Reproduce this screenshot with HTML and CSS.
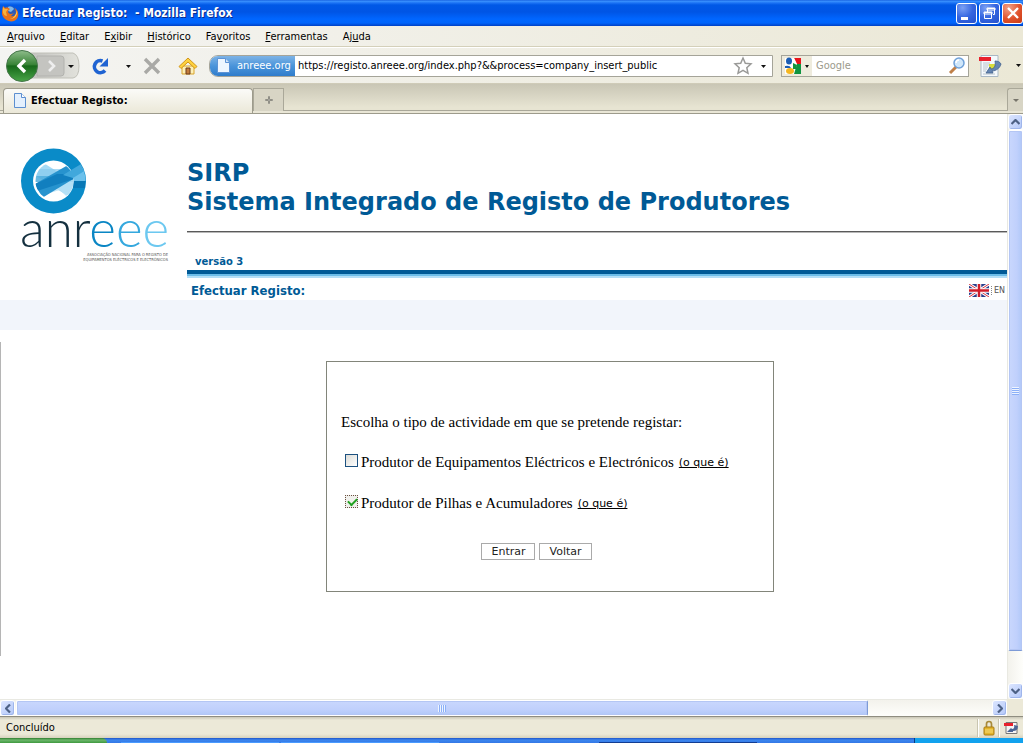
FILE: index.html
```html
<!DOCTYPE html>
<html lang="pt">
<head>
<meta charset="utf-8">
<title>Efectuar Registo: - Mozilla Firefox</title>
<link rel="stylesheet" href="styles.css">
</head>
<body>
<header class="titlebar">
  <svg class="fox" width="18" height="18" viewBox="0 0 18 18">
    <circle cx="9" cy="9" r="7" fill="#2c5cb8"/><path d="M7 3c3-1 5 0 6 2l-3 3-3-1z" fill="#7db8ee"/>
    <path d="M2 2l2 2c2-1 4 0 5 1L7 7c0 3 3 4 6 2l-3 3c3 1 5-1 5-4l-1-4c5 4 4 11-1 13S0 14 1 8z" fill="#e8721c"/>
    <path d="M2 3l2 2 3 0-2 3 1 4c-3 0-5-3-4-9z" fill="#f9b13c"/><path d="M16 6c1 5-2 9-7 9 4-1 6-4 7-9z" fill="#fbd25a"/>
  </svg>
  <span class="title">Efectuar Registo: &nbsp;- Mozilla Firefox</span>
  <div class="winbtns">
    <button class="winbtn" aria-label="Minimizar"><svg width="19" height="19"><path d="M4 13h7v3H4z" fill="#fff"/></svg></button>
    <button class="winbtn" aria-label="Restaurar"><svg width="19" height="19"><path d="M7.500 8V4.500h7v6H13M7 4h8v2H7z M4.500 8.500h7v6h-7z M4 8h8v2H4z" fill="none" stroke="#fff"/></svg></button>
    <button class="winbtn close" aria-label="Fechar"><svg width="19" height="19"><path d="M5 4l10 10M15 4L5 14" stroke="#fff" stroke-width="2.300"/></svg></button>
  </div>
</header>
<nav class="menubar">
  <button><u>A</u>rquivo</button><button><u>E</u>ditar</button><button>E<u>x</u>ibir</button><button><u>H</u>istórico</button><button>Fa<u>v</u>oritos</button><button><u>F</u>erramentas</button><button>Aj<u>u</u>da</button>
</nav>
<div class="toolbar">
  <button class="backfwd" aria-label="Voltar e avançar">
    <svg width="78" height="34" viewBox="0 0 78 34">
      <defs>
        <linearGradient id="gb" x2="0" y2="1"><stop offset="0" stop-color="#8fbd8b"/><stop offset=".45" stop-color="#3a8438"/><stop offset=".5" stop-color="#17691a"/><stop offset="1" stop-color="#49a548"/></linearGradient>
        <linearGradient id="gg" x2="1" y2="0"><stop offset="0" stop-color="#b9b9b5"/><stop offset=".5" stop-color="#cdcdc9"/><stop offset="1" stop-color="#e2e2dc"/></linearGradient>
      </defs>
      <path d="M12 4h58q6 2 6 13t-6 12H12z" fill="url(#gg)" stroke="#c0c0b8"/>
      <path d="M34 7h24q3 0 3 3v14q0 3-3 3H34z" fill="#c4c4c0" stroke="#b2b2ae"/>
      <circle cx="19" cy="17" r="15.500" fill="url(#gb)" stroke="#46764a"/>
      <path d="M22 11l-6 6 6 6" fill="none" stroke="#fff" stroke-width="3.400"/>
      <path d="M46 12l5 5-5 5" fill="none" stroke="#eee" stroke-width="2.600"/>
      <path d="M65 16h6l-3 3z" fill="#111"/>
    </svg>
  </button>
  <button class="ico" aria-label="Recarregar">
    <svg width="44" height="24" viewBox="0 0 44 24"><path d="M12.500 7A6 6 0 1 0 15 16.500" fill="none" stroke="#1f63d2" stroke-width="3.600"/><path d="M18 4v8.500H9.500z" fill="#1f63d2"/><path d="M36 11h5l-2.500 3z" fill="#111"/></svg>
  </button>
  <button class="ico stop" aria-label="Parar"><svg width="20" height="20"><path d="M3 3l14 14M17 3L3 17" stroke="#a9a9a6" stroke-width="3.400"/></svg></button>
  <button class="ico" aria-label="Início"><svg width="20" height="20"><path d="M4 10h12v8H4z" fill="#fdf0b8" stroke="#d9a52c"/><path d="M10 2L1 10.500l2 2 7-6.500 7 6.500 2-2z" fill="#ffd23f" stroke="#d0951b"/><path d="M8 12h4v6H8z" fill="#c27c3c" stroke="#6d3a1a"/></svg></button>
  <div class="urlbox">
    <span class="identity">
      <svg width="16" height="17"><path d="M1.500 1.500h8l4 4v10h-12z" fill="#eef6ff" stroke="#5c93d6"/><path d="M9.500 1.500v4h4" fill="#cfe2f8" stroke="#5c93d6"/></svg>
      anreee.org</span>
    <input class="url" type="text" aria-label="Endereço" value="https://registo.anreee.org/index.php?&amp;&amp;process=company_insert_public">
    <svg width="39" height="20"><path d="M10 2l2.300 5.200 5.700.6-4.200 3.900 1.200 5.600-5-2.900-5 2.900 1.200-5.600L2 7.800l5.700-.6z" fill="#fff" stroke="#9a9a98" stroke-width="1.500"/><path d="M28 9h5l-2.500 3z" fill="#111"/></svg>
  </div>
  <div class="searchbox">
    <button class="engine" aria-label="Motor de busca"><svg width="27" height="18"><path d="M10 1h7v7h-4z" fill="#e8131b"/><path d="M9 7h8v10H9z" fill="#109440"/><path d="M1 1h9l3 6-3 10H1z" fill="#fff"/><ellipse cx="5" cy="4" rx="3" ry="3.500" fill="#1c5db4"/><path d="M1 9q5-1 6 2H1z" fill="#1c5db4"/><ellipse cx="6" cy="14" rx="4" ry="3" fill="#f5b620"/><path d="M9 6l4 2-1 4-3 0z" fill="#109440"/><path d="M21 8h4l-2 3z" fill="#111"/></svg></button>
    <input class="search" type="text" aria-label="Pesquisar" placeholder="Google">
    <svg width="20" height="20"><path d="M3 17l6-6" stroke="#bf7f48" stroke-width="3"/><circle cx="12" cy="7" r="5" fill="#cfe6fa" stroke="#6fa0d8" stroke-width="1.500"/><path d="M9 7q0-3 3-3" stroke="#fff" stroke-width="1.500" fill="none"/></svg>
  </div>
  <button class="ico pdf" aria-label="Converter"><svg width="24" height="24"><path d="M3 1.500h17v21H3z" fill="#f5f9fc" stroke="#a9b8c4"/><path d="M5 9h7M5 11h7M5 13h5M5 15h4M5 17h3M5 20h12" stroke="#b9c4cd"/><path d="M1 3h12v4H1z" fill="#e8202c"/><path d="M11 10h6v5h-6z" fill="#d8dc3c"/><path d="M17 7c3 0 5 1 6 3-1 4-5 7-9 7l1 2H8l4-6 1 2c3 0 5-3 4-8z" fill="#6585b2" stroke="#3f5f8c" stroke-width=".8"/></svg></button>
  <svg class="over" width="7" height="6"><path d="M1 1h5L3.500 4z" fill="#111"/></svg>
</div>
<div class="tabs">
  <button class="tab"><svg width="16" height="17"><path d="M2.500 1.500h7l4 4v10h-11z" fill="#e4f0fd" stroke="#5c8fd0"/><path d="M9.500 1.500v4h4" fill="#fff" stroke="#5c8fd0"/></svg>Efectuar Registo:</button>
  <button class="newtab" aria-label="Nova aba"><svg width="10" height="10"><path d="M4.500 1.500h1v3h3v1h-3v3h-1v-3h-3v-1h3z" fill="#ddd" stroke="#908f86"/></svg></button>
  <button class="alltabs" aria-label="Todas as abas"><svg width="7" height="5"><path d="M1 1h6L4 4z" fill="#77756b"/></svg></button>
</div>
<div class="view">
  <main class="page">
    <div class="head">
      <div class="brand">
        <svg class="mark" width="66" height="66" viewBox="0 0 66 66">
          <defs><clipPath id="disc"><circle cx="33.500" cy="33" r="32"/></clipPath><clipPath id="hole"><circle cx="34.500" cy="33" r="19"/></clipPath></defs>
          <circle cx="33.500" cy="33" r="32.500" fill="#0a8bc8"/>
          <circle cx="33.500" cy="33" r="20.500" fill="#fff"/>
          <g clip-path="url(#hole)">
            <path d="M14 19l8-5 32 20v10l-6 4-32-20z" fill="#a5daf5"/>
            <path d="M16 21h38v7H16z" fill="#86cbee" opacity=".7"/>
            <path d="M14 28h40v6H14z" fill="#4cabdc" opacity=".85"/>
            <path d="M18 40l8-2 28-8v14l-6 6-8-8-14 4z" fill="#b7e1f6" opacity=".8"/>
            <path d="M15 36l40-23v17L22 50z" fill="#2793ce"/>
            <path d="M15 36l22-10h17v5l-37 12z" fill="#117fbf"/>
          </g>
          <g clip-path="url(#disc)">
            <path d="M53 25l13-7v15H54z" fill="#6cc1ec"/>
            <path d="M43 27l23-14v9L53 30z" fill="#41a8dc"/>
            <path d="M54 33h12v7H53z" fill="#0878b6"/>
          </g>
        </svg>
        <div class="wordmark"><span>anr</span><span class="b1">e</span><span class="b2">e</span><span class="b3">e</span></div>
        <div class="tagline">ASSOCIAÇÃO NACIONAL PARA O REGISTO DE<br>EQUIPAMENTOS ELÉCTRICOS E ELECTRÓNICOS</div>
      </div>
      <div class="banner">
        <h1>SIRP<br>Sistema Integrado de Registo de Produtores</h1>
        <div class="version">versão 3</div>
        <div class="subhead">
          <h2>Efectuar Registo:</h2>
          <a class="lang" href="#en"><svg width="20" height="13" viewBox="0 0 20 13"><rect width="20" height="13" rx="1" fill="#2a3f8c"/><path d="M0 0l20 13M20 0L0 13" stroke="#fff" stroke-width="3"/><path d="M0 0l20 13M20 0L0 13" stroke="#d8323e"/><path d="M10 0v13M0 6.500h20" stroke="#fff" stroke-width="4.500"/><path d="M10 0v13M0 6.500h20" stroke="#d01c2a" stroke-width="2.500"/></svg><span>EN</span></a>
        </div>
      </div>
    </div>
    <div class="band"></div>
    <div class="content">
      <form class="card">
        <p>Escolha o tipo de actividade em que se pretende registar:</p>
        <div class="option"><input type="checkbox" id="eee"><label for="eee">Produtor de Equipamentos Eléctricos e Electrónicos</label><a href="#eee">(o que é)</a></div>
        <div class="option"><input type="checkbox" id="pa" class="focused" checked><label for="pa">Produtor de Pilhas e Acumuladores</label><a href="#pa">(o que é)</a></div>
        <div class="actions"><button type="button">Entrar</button><button type="button">Voltar</button></div>
      </form>
    </div>
  </main>
  <div class="vscroll">
    <button class="sb" aria-label="Para cima"><svg width="9" height="6"><path d="M.5 5l4-4 4 4" fill="none" stroke="#4d6185" stroke-width="2.200"/></svg></button>
    <div class="vthumb"><i></i></div>
    <button class="sb" aria-label="Para baixo"><svg width="9" height="6"><path d="M.5 1l4 4 4-4" fill="none" stroke="#4d6185" stroke-width="2.200"/></svg></button>
  </div>
</div>
<div class="hrow">
  <div class="hscroll">
    <button class="sb" aria-label="Para a esquerda"><svg width="6" height="9"><path d="M5 .5l-4 4 4 4" fill="none" stroke="#4d6185" stroke-width="2.200"/></svg></button>
    <div class="hthumb"><i></i></div>
    <button class="sb" aria-label="Para a direita"><svg width="6" height="9"><path d="M1 .5l4 4-4 4" fill="none" stroke="#4d6185" stroke-width="2.200"/></svg></button>
  </div>
</div>
<footer class="status">
  <span class="msg">Concluído</span>
  <span class="cell"><svg width="12" height="16"><path d="M3.500 7V4q0-2.500 2.500-2.500T8.500 4v3" fill="none" stroke="#a88a3a" stroke-width="1.700"/><rect x="1" y="7" width="10" height="8" rx="1" fill="#e3b52c" stroke="#a87b14"/><path d="M2 10h8M2 12h8" stroke="#f8dc78"/></svg></span>
  <span class="cell"><svg width="16" height="14"><path d="M3 1.500h11v11H3z" fill="#f4f4f4" stroke="#777"/><path d="M1 2h9v3H1z" fill="#e8202c"/><path d="M11 4l4 1q0 5-5 5v1H4l4-4 1 1q3 0 2-4z" fill="#4a6494"/></svg></span>
</footer>
<div class="taskbar"><div class="start"></div><div class="tasks"><i></i><i></i><i class="on"></i></div><div class="tray"></div></div>
</body>
</html>
```
FILE: styles.css
```css
* { box-sizing: border-box; }
body {
  margin: 0;
  height: 100vh;
  display: flex;
  flex-direction: column;
  overflow: hidden;
  background: #fff;
  color: #000;
  font: 11px "DejaVu Sans Condensed", "DejaVu Sans", sans-serif;
}
button, input { font: inherit; color: inherit; margin: 0; padding: 0; }
button { border: 0; background: none; }
svg { display: block; flex: none; }

.titlebar {
  flex: none;
  height: 26px;
  display: flex;
  align-items: center;
  padding: 0 0 0 1px;
  background: linear-gradient(#0b52d8 0, #3d95ff 1px, #1b72f4 3px, #0058e6 5px, #0055e5 12px, #0066ff 19px, #0064fb 23px, #0040c4 26px);
}
.fox { margin-right: 3px; }
.title { flex: 1; color: #fff; font-size: 12px; font-weight: bold; text-shadow: 1px 1px #0a2a8c; white-space: nowrap; }
.winbtns { display: flex; gap: 2px; }
.winbtn {
  width: 21px;
  height: 21px;
  border: 1px solid #fff;
  border-radius: 3px;
  background: radial-gradient(circle at 30% 20%, #7ba0f4, #3465e0 50%, #2350cc);
}
.close { background: radial-gradient(circle at 30% 20%, #f0a088, #e0522c 55%, #c83a14); }

.menubar {
  flex: none;
  height: 22px;
  display: flex;
  align-items: center;
  gap: 15px;
  padding: 0 7px 1px;
  background: linear-gradient(90deg, #f4f4f2, #ebe8d6);
  border-bottom: 1px solid #fff;
  box-shadow: inset 0 -1px #d4d0ba;
}
.menubar u { text-underline-offset: 1px; }

.toolbar {
  flex: none;
  height: 36px;
  display: flex;
  align-items: center;
  background: linear-gradient(90deg, #f4f4f2, #ebe8d6);
  border-bottom: 1px solid #cfcbb8;
}
.backfwd { margin: 0 9px 0 3px; }
.stop { margin: 0 16px 0 8px; }
.urlbox, .searchbox {
  height: 22px;
  display: flex;
  align-items: center;
  background: #fff;
  border: 1px solid #a5a499;
}
.urlbox { flex: 1; margin: 0 8px 0 11px; border-radius: 9px 0 0 9px; overflow: hidden; }
.identity {
  height: 20px;
  width: 85px;
  flex: none;
  display: flex;
  align-items: center;
  gap: 5px;
  padding-left: 6px;
  color: #fff;
  white-space: nowrap;
  background: linear-gradient(#7db3e6, #4a94da 50%, #2f7ccb);
}
.url { flex: 1; min-width: 0; border: 0; padding: 0 3px; outline: 0; background: none; }
.searchbox { width: 188px; padding-right: 1px; }
.engine { height: 20px; padding: 0 1px 0 2px; background: #eeebdd; }
.search { flex: 1; min-width: 0; border: 0; padding: 0 4px; outline: 0; background: none; }
.search::placeholder { color: #9b9a8c; opacity: 1; }
.pdf { margin: 0 13px 0 9px; }
.over { margin-right: 1px; }

.tabs {
  flex: none;
  height: 30px;
  display: flex;
  align-items: stretch;
  padding: 4px 0 0 3px;
  background: linear-gradient(#c9c6b5, #e7e4d2 80%);
  border-bottom: 1px solid #9d9b8c;
  box-shadow: inset 0 -2px #e9e6d6, inset 0 -3px #a9a799;
}
.tab {
  width: 250px;
  height: 25px;
  display: flex;
  align-items: center;
  gap: 3px;
  padding: 0 0 2px 8px;
  font-weight: bold;
  border: 1px solid #9d9b8c;
  border-bottom: 0;
  border-radius: 4px 4px 0 0;
  background: linear-gradient(#fbfbf8, #ebe8d8);
}
.newtab, .alltabs {
  display: flex;
  align-items: center;
  justify-content: center;
  height: 23px;
  border: 1px solid #aaa899;
  border-bottom: 0;
  background: #d8d5c5;
}
.newtab { width: 31px; }
.alltabs { width: 16px; margin-left: auto; border-right: 0; border-radius: 3px 0 0 0; }

.view { flex: 1; min-height: 0; display: flex; }
.page { flex: 1; min-width: 0; overflow: hidden; }
.head { display: grid; grid-template-columns: 187px 1fr; height: 186px; }
.brand { padding: 34px 18px 0 20px; }
.wordmark {
  margin-top: -8px;
  white-space: nowrap;
  font: 300 51px/44px Lato, sans-serif;
  color: #14303f;
}
.b1 { color: #0a86c4; }
.b2 { color: #35a8de; }
.b3 { color: #6cc8f0; }
.tagline { width: 148px; margin-top: 2px; text-align: right; white-space: nowrap; font: 4px/5px "DejaVu Sans Condensed", sans-serif; color: #555; }
.banner { font-family: "DejaVu Sans", sans-serif; color: #005a96; min-width: 0; }
h1 {
  margin: 0;
  height: 119px;
  padding-top: 45px;
  font-size: 24px;
  line-height: 29px;
  white-space: nowrap;
  background: linear-gradient(#5a5a5a 1px, #b8b8b8 1px) bottom / 100% 2px no-repeat;
}
.version {
  height: 45px;
  padding: 23px 0 0 8px;
  font-size: 10px;
  line-height: 12px;
  font-weight: bold;
  background: linear-gradient(#005a96 4px, #6dbde8 4px, #6dbde8 6px, #b4dff7 6px) bottom / 100% 8px no-repeat;
}
.subhead { display: flex; align-items: center; justify-content: space-between; height: 22px; padding: 2px 2px 0 4px; }
h2 { margin: 0; font: bold 13px "DejaVu Sans Condensed", sans-serif; }
.lang { display: flex; align-items: center; gap: 2px; color: #555; text-decoration: none; font-size: 8px; }
.lang span { padding-left: 2px; border-left: 1px dotted #888; }
.band { height: 30px; background: #f2f5fb; }
.content {
  height: 314px;
  margin-top: 12px;
  padding: 19px 0 0 92px;
  border-left: 1px solid #b5b5b5;
}
.card {
  width: 448px;
  margin: 0 auto;
  padding: 50px 14px 31px;
  border: 1px solid #82857a;
  font: 15px/20px "Liberation Serif", serif;
}
.card p { margin: 0 0 20px; }
.option { display: flex; align-items: center; height: 20px; margin-bottom: 21px; padding-left: 4px; }
.option input {
  appearance: none;
  width: 13px;
  height: 13px;
  margin: 0 3px 3px 0;
  border: 1px solid #1c5180;
  background: linear-gradient(135deg, #dcdcd7, #fff);
}
.option .focused {
  border: 1px dotted #6b5040;
  background: #f0f0ec;
}
.option .focused::before {
  content: "";
  display: block;
  width: 7px;
  height: 4px;
  margin: 2px 0 0 2px;
  border: solid #21a121;
  border-width: 0 0 2px 2px;
  transform: rotate(-45deg);
}
.option a { margin-left: 5px; color: #000; font: 11px/20px "DejaVu Sans", sans-serif; padding-top: 2px; }
.actions { display: flex; justify-content: center; gap: 4px; margin-top: 30px; padding-right: 27px; }
.actions button {
  height: 17px;
  padding: 0 9px;
  border: 1px solid #aaa;
  background: #fff;
  color: #222;
  font: 11px/15px "DejaVu Sans", sans-serif;
}

.vscroll {
  width: 16px;
  display: flex;
  flex-direction: column;
  border-left: 1px solid #e9e9e2;
  background: linear-gradient(90deg, #f3f2ec, #fefefb);
}
.sb {
  flex: none;
  width: 15px;
  height: 16px;
  display: flex;
  align-items: center;
  justify-content: center;
  border: 1px solid #fff;
  border-radius: 3px;
  background: linear-gradient(135deg, #dbe5ff, #b4c8f8);
  box-shadow: inset -1px -1px #9fb6ec;
}
.vthumb, .hthumb { display: flex; align-items: center; justify-content: center; border: 1px solid #fff; box-shadow: inset 0 0 0 1px #b4c6f4; border-radius: 2px; }
.vthumb { height: 521px; background: linear-gradient(90deg, #c9d7fd, #c0d0fc 60%, #b0c8f8); border-bottom-color: #7d9ad6; }
.vthumb i { width: 7px; height: 8px; background: repeating-linear-gradient(#eef4fe 0 1px, #8cb0f8 1px 2px); }
.vscroll .sb:last-child { margin-top: auto; }
.hrow { flex: none; height: 17px; background: #ece9d8; }
.hscroll { height: 17px; margin-right: 16px; display: flex; border-top: 1px solid #e9e9e2; background: linear-gradient(#f3f2ec, #fefefb); }
.hthumb { width: 852px; margin-left: 1px; background: linear-gradient(#c9d7fd, #c0d0fc 60%, #b0c8f8); border-right-color: #7d9ad6; }
.hthumb i { width: 8px; height: 7px; background: repeating-linear-gradient(90deg, #eef4fe 0 1px, #8cb0f8 1px 2px); }
.hscroll .sb:last-child { margin-left: auto; }

.status {
  flex: none;
  height: 22px;
  display: flex;
  align-items: center;
  padding-left: 6px;
  border-top: 1px solid #8f8d80;
  background: linear-gradient(#c9c6b6, #ece9d8 3px, #ece9d8 17px, #d6d2bd);
}
.msg { flex: 1; }
.cell { height: 18px; display: flex; align-items: center; padding: 0 4px; border-left: 1px solid #fff; box-shadow: -1px 0 #c9c5b0; }
.cell:last-child { padding: 0 4px 0 3px; }
.taskbar { flex: none; height: 5px; display: flex; background: linear-gradient(#1f54c8, #3c86ee 2px, #3478e6); }
.start { width: 107px; border-radius: 0 5px 0 0; background: linear-gradient(#2f7d2f, #6db66c 2px, #3f9a3f); }
.tasks { flex: 1; display: flex; gap: 2px; padding: 4px 0 0 14px; }
.tasks i { width: 158px; background: #4a9bff; }
.tasks .on { margin-left: 158px; background: #123d92; }
.tray { width: 109px; border-left: 1px solid #0b3a80; background: #12a2ee; }
```
